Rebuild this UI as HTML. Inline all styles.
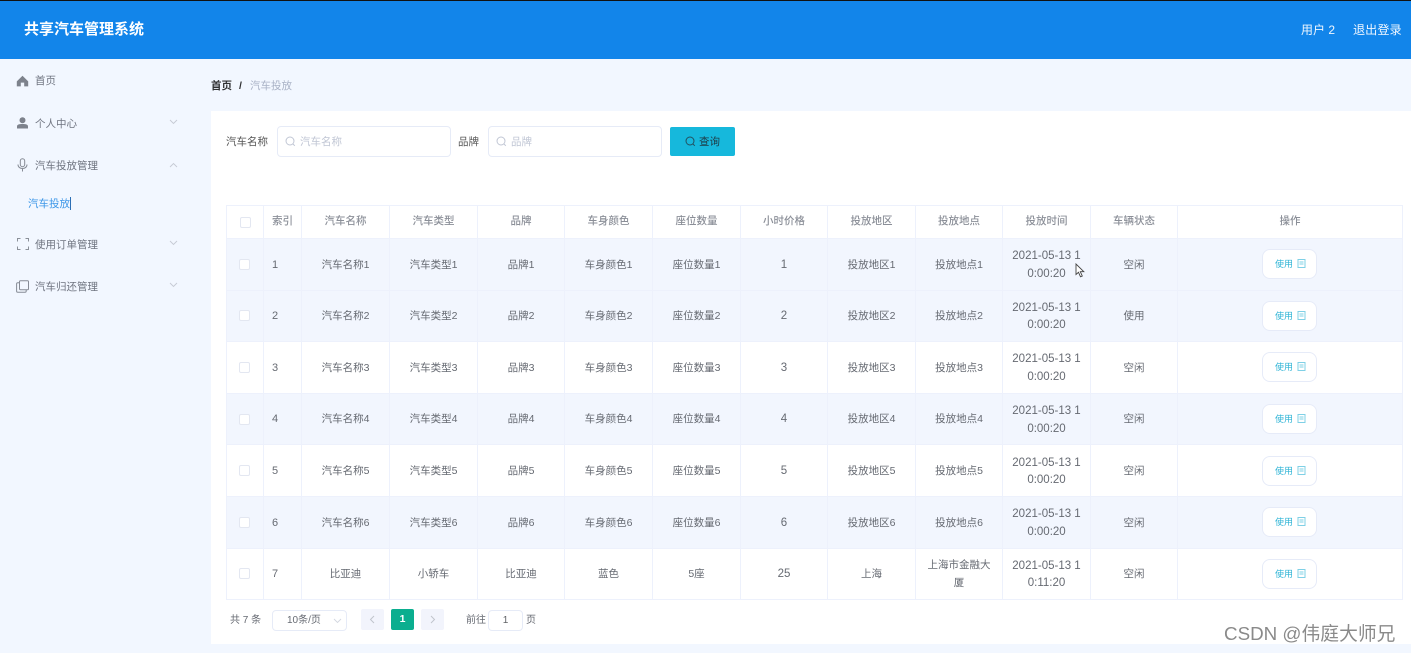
<!DOCTYPE html>
<html lang="zh"><head><meta charset="utf-8"><title>共享汽车管理系统</title>
<style>
*{box-sizing:border-box}
html,body{margin:0;padding:0;width:1411px;height:653px;overflow:hidden;background:#f2f7ff;font-family:"Liberation Sans","Noto Sans CJK SC",sans-serif;color:#606266}
body{filter:blur(.3px)}
.a{position:absolute;white-space:nowrap}
#top{left:0;top:0;width:1411px;height:59px;background:#1285ea;border-top:1px solid #111}
.menu{font-size:10.5px;color:#6f7480;line-height:14px}
.ic{position:absolute}
#card{left:211px;top:111px;width:1200px;height:533px;background:#fff}
.inp{height:31px;background:#fff;border:1px solid #e6ebf7;border-radius:4px}
.ph{font-size:10.5px;color:#c0c6d4;line-height:14px}
table{position:absolute;left:226px;top:205px;width:1177px;border-collapse:collapse;table-layout:fixed;font-size:10.5px;color:#666a72}
td,th{border:1px solid #edf1fc;text-align:center;padding:0 8px;line-height:17.5px;font-weight:400;overflow:hidden;word-break:break-all}
td{padding-top:2px}
td:has(span){padding-top:0}
th{height:33px;color:#8b8f98;font-weight:500;background:#fff}
tr{height:51.6px}
tr.h{height:33px}
tr.s td{background:#f2f6fe}
td.l,th.l{text-align:left;padding-left:8px;padding-right:0}
td.l{font-size:11px}
td.n{font-size:11.5px}
td.t{font-size:11.5px;padding-top:3px}
.cb{display:block;width:11px;height:11px;margin:0 auto;background:#fff;border:1px solid #e3e7f1;border-radius:2px}
td .cb{position:relative;left:-1px}
.btn{display:block;width:54.5px;height:30px;margin:0 auto;background:#fff;border:1px solid #e6ebf8;border-radius:8px;font-size:9px;color:#2fb4d6;line-height:28px;padding-left:2px;position:relative;left:-.5px}
.btn svg{vertical-align:-1px;margin-left:4px}
.pg{width:23px;height:21px;background:#f2f4fc;border-radius:2px;text-align:center}
.sm{font-size:10px;color:#666a72;line-height:14px}
</style></head><body>
<div id="top" class="a"></div>
<div class="a" style="left:24px;top:20px;font-size:15px;font-weight:700;color:#fff;line-height:20px">共享汽车管理系统</div>
<div class="a" style="left:1301px;top:22px;font-size:12px;color:#eef6ff;line-height:16px">用户 2</div>
<div class="a" style="left:1353px;top:22px;font-size:12.2px;color:#eef6ff;line-height:16px">退出登录</div>

<svg class="ic" style="left:16px;top:75px" width="13" height="12" viewBox="0 0 13 12"><path d="M6.5 0.8L0.8 6.4V11.4H4.8V7.6H8.2V11.4H12.2V6.4Z" fill="#7d828c"/></svg>
<div class="a menu" style="left:35px;top:74px">首页</div>
<svg class="ic" style="left:16px;top:117px" width="13" height="12" viewBox="0 0 13 12"><circle cx="6.5" cy="3.2" r="3" fill="#7d828c"/><path d="M1 11.5V9.4C1 7.6 3 7 6.5 7S12 7.6 12 9.4V11.5Z" fill="#7d828c"/></svg>
<div class="a menu" style="left:35px;top:116.500px">个人中心</div>
<svg class="a" style="left:169px;top:119px" width="9" height="6" viewBox="0 0 9 6"><path d="M1 1L4.500 4.500L8 1" fill="none" stroke="#c6cad4" stroke-width="0.9"/></svg>
<svg class="ic" style="left:17px;top:158px" width="11" height="14" viewBox="0 0 11 14"><rect x="3.300" y="0.700" width="4.400" height="8" rx="2.200" fill="none" stroke="#868b95"/><path d="M1 6.500C1 9 3 10.500 5.500 10.500S10 9 10 6.500M5.500 10.500V13.500" fill="none" stroke="#868b95"/></svg>
<div class="a menu" style="left:35px;top:158.500px">汽车投放管理</div>
<svg class="a" style="left:169px;top:162px" width="9" height="6" viewBox="0 0 9 6"><path d="M1 5L4.500 1.500L8 5" fill="none" stroke="#c6cad4" stroke-width="0.9"/></svg>
<div class="a" style="left:28px;top:197px;font-size:10.5px;line-height:14px;color:#3d97e8">汽车投放</div>
<div class="a" style="left:70px;top:197px;width:1px;height:13px;background:#2c6fb5"></div>
<svg class="ic" style="left:17px;top:238px" width="12" height="12" viewBox="0 0 12 12"><path d="M0.500 3.500V0.500H3.500M8.500 0.500H11.500V3.500M11.500 8.500V11.500H8.500M3.500 11.500H0.500V8.500" fill="none" stroke="#8b9099"/></svg>
<div class="a menu" style="left:35px;top:237.500px">使用订单管理</div>
<svg class="a" style="left:169px;top:240px" width="9" height="6" viewBox="0 0 9 6"><path d="M1 1L4.500 4.500L8 1" fill="none" stroke="#c6cad4" stroke-width="0.9"/></svg>
<svg class="ic" style="left:16px;top:280px" width="13" height="13" viewBox="0 0 13 13"><rect x="3.500" y="0.700" width="9" height="9" rx="1" fill="none" stroke="#868b95"/><path d="M3.500 2.800H1.800C1.100 2.800 0.600 3.300 0.600 4V11C0.600 11.700 1.100 12.300 1.800 12.300H9C9.700 12.300 10.200 11.700 10.200 11V9.700" fill="none" stroke="#868b95"/></svg>
<div class="a menu" style="left:35px;top:279.500px">汽车归还管理</div>
<svg class="a" style="left:169px;top:282px" width="9" height="6" viewBox="0 0 9 6"><path d="M1 1L4.500 4.500L8 1" fill="none" stroke="#c6cad4" stroke-width="0.9"/></svg>

<div class="a" style="left:211px;top:79px;font-size:10.5px;line-height:14px;color:#303133;font-weight:700">首页</div>
<div class="a" style="left:239px;top:79px;font-size:10.5px;line-height:14px;color:#303133;font-weight:700">/</div>
<div class="a" style="left:250px;top:79px;font-size:10.5px;line-height:14px;color:#a9b2c6">汽车投放</div>

<div id="card" class="a"></div>
<div class="a" style="left:226px;top:135px;font-size:10.5px;line-height:14px;color:#555">汽车名称</div>
<div class="a inp" style="left:277px;top:126px;width:174px"></div>
<svg class="a" style="left:285px;top:136px" width="11" height="11" viewBox="0 0 11 11"><circle cx="5" cy="5" r="4" fill="none" stroke="#c0c6d4"/><path d="M8 8L9.800 9.800" stroke="#c0c6d4"/></svg>
<div class="a ph" style="left:300px;top:135px">汽车名称</div>
<div class="a" style="left:458px;top:135px;font-size:10.5px;line-height:14px;color:#555">品牌</div>
<div class="a inp" style="left:488px;top:126px;width:174px"></div>
<svg class="a" style="left:496px;top:136px" width="11" height="11" viewBox="0 0 11 11"><circle cx="5" cy="5" r="4" fill="none" stroke="#c0c6d4"/><path d="M8 8L9.800 9.800" stroke="#c0c6d4"/></svg>
<div class="a ph" style="left:511px;top:135px">品牌</div>
<div class="a" style="left:670px;top:127px;width:65px;height:29px;background:#16b8dc;border-radius:2px"></div>
<svg class="a" style="left:685px;top:136px" width="11" height="11" viewBox="0 0 11 11"><circle cx="5" cy="5" r="4" fill="none" stroke="#23505f"/><path d="M8 8L9.800 9.800" stroke="#23505f"/></svg>
<div class="a" style="left:699px;top:135px;font-size:10.5px;line-height:14px;color:#1e3b46">查询</div>

<table>
<colgroup><col style="width:37px"><col style="width:38px"><col style="width:88px"><col style="width:88px"><col style="width:87px"><col style="width:88px"><col style="width:88px"><col style="width:87px"><col style="width:88px"><col style="width:87px"><col style="width:88px"><col style="width:87px"><col style="width:225px"></colgroup>
<tr class="h"><th><span class="cb"></span></th><th class="l">索引</th><th>汽车名称</th><th>汽车类型</th><th>品牌</th><th>车身颜色</th><th>座位数量</th><th>小时价格</th><th>投放地区</th><th>投放地点</th><th>投放时间</th><th>车辆状态</th><th>操作</th></tr>
<tr class="s"><td><span class="cb"></span></td><td class="l">1</td><td>汽车名称1</td><td>汽车类型1</td><td>品牌1</td><td>车身颜色1</td><td>座位数量1</td><td class="n">1</td><td>投放地区1</td><td>投放地点1</td><td class="t">2021-05-13 10:00:20</td><td>空闲</td><td><span class="btn">使用<svg width="9" height="9" viewBox="0 0 9 9"><path d="M1 .5H8V8.500H1ZM2.500 3H6.500M2.500 5H6.500" fill="none" stroke="#7fd0e6"/></svg></span></td></tr>
<tr class="s"><td><span class="cb"></span></td><td class="l">2</td><td>汽车名称2</td><td>汽车类型2</td><td>品牌2</td><td>车身颜色2</td><td>座位数量2</td><td class="n">2</td><td>投放地区2</td><td>投放地点2</td><td class="t">2021-05-13 10:00:20</td><td>使用</td><td><span class="btn">使用<svg width="9" height="9" viewBox="0 0 9 9"><path d="M1 .5H8V8.500H1ZM2.500 3H6.500M2.500 5H6.500" fill="none" stroke="#7fd0e6"/></svg></span></td></tr>
<tr><td><span class="cb"></span></td><td class="l">3</td><td>汽车名称3</td><td>汽车类型3</td><td>品牌3</td><td>车身颜色3</td><td>座位数量3</td><td class="n">3</td><td>投放地区3</td><td>投放地点3</td><td class="t">2021-05-13 10:00:20</td><td>空闲</td><td><span class="btn">使用<svg width="9" height="9" viewBox="0 0 9 9"><path d="M1 .5H8V8.500H1ZM2.500 3H6.500M2.500 5H6.500" fill="none" stroke="#7fd0e6"/></svg></span></td></tr>
<tr class="s"><td><span class="cb"></span></td><td class="l">4</td><td>汽车名称4</td><td>汽车类型4</td><td>品牌4</td><td>车身颜色4</td><td>座位数量4</td><td class="n">4</td><td>投放地区4</td><td>投放地点4</td><td class="t">2021-05-13 10:00:20</td><td>空闲</td><td><span class="btn">使用<svg width="9" height="9" viewBox="0 0 9 9"><path d="M1 .5H8V8.500H1ZM2.500 3H6.500M2.500 5H6.500" fill="none" stroke="#7fd0e6"/></svg></span></td></tr>
<tr><td><span class="cb"></span></td><td class="l">5</td><td>汽车名称5</td><td>汽车类型5</td><td>品牌5</td><td>车身颜色5</td><td>座位数量5</td><td class="n">5</td><td>投放地区5</td><td>投放地点5</td><td class="t">2021-05-13 10:00:20</td><td>空闲</td><td><span class="btn">使用<svg width="9" height="9" viewBox="0 0 9 9"><path d="M1 .5H8V8.500H1ZM2.500 3H6.500M2.500 5H6.500" fill="none" stroke="#7fd0e6"/></svg></span></td></tr>
<tr class="s"><td><span class="cb"></span></td><td class="l">6</td><td>汽车名称6</td><td>汽车类型6</td><td>品牌6</td><td>车身颜色6</td><td>座位数量6</td><td class="n">6</td><td>投放地区6</td><td>投放地点6</td><td class="t">2021-05-13 10:00:20</td><td>空闲</td><td><span class="btn">使用<svg width="9" height="9" viewBox="0 0 9 9"><path d="M1 .5H8V8.500H1ZM2.500 3H6.500M2.500 5H6.500" fill="none" stroke="#7fd0e6"/></svg></span></td></tr>
<tr><td><span class="cb"></span></td><td class="l">7</td><td>比亚迪</td><td>小轿车</td><td>比亚迪</td><td>蓝色</td><td>5座</td><td class="n">25</td><td>上海</td><td>上海市金融大厦</td><td class="t">2021-05-13 10:11:20</td><td>空闲</td><td><span class="btn">使用<svg width="9" height="9" viewBox="0 0 9 9"><path d="M1 .5H8V8.500H1ZM2.500 3H6.500M2.500 5H6.500" fill="none" stroke="#7fd0e6"/></svg></span></td></tr>
</table>

<svg class="a" style="left:1075px;top:263px" width="11" height="15" viewBox="0 0 11 15"><path d="M1 1V11.500L3.500 9.300L5.500 13.800L7.300 13L5.300 8.700H8.800Z" fill="#fff" stroke="#444" stroke-width="0.900"/></svg>

<div class="a sm" style="left:230px;top:614px">共 7 条</div>
<div class="a inp" style="left:272px;top:610px;width:75px;height:21px"></div>
<div class="a sm" style="left:287px;top:614px">10条/页</div>
<svg class="a" style="left:333px;top:618px" width="9" height="6" viewBox="0 0 9 6"><path d="M1 1L4.500 4.500L8 1" fill="none" stroke="#d3d7e0" stroke-width="0.900"/></svg>
<div class="a pg" style="left:361px;top:609px"></div>
<svg class="a" style="left:369px;top:615px" width="6" height="9" viewBox="0 0 6 9"><path d="M5 1L1.500 4.500L5 8" fill="none" stroke="#c0c4cc"/></svg>
<div class="a" style="left:391px;top:609px;width:23px;height:21px;background:#0bae8f;border-radius:2px;color:#fff;font-size:10.5px;font-weight:700;text-align:center;line-height:21px">1</div>
<div class="a pg" style="left:421px;top:609px"></div>
<svg class="a" style="left:430px;top:615px" width="6" height="9" viewBox="0 0 6 9"><path d="M1 1L4.500 4.500L1 8" fill="none" stroke="#c0c4cc"/></svg>
<div class="a sm" style="left:466px;top:614px">前往</div>
<div class="a inp" style="left:488px;top:610px;width:35px;height:21px;font-size:10px;text-align:center;line-height:19px">1</div>
<div class="a sm" style="left:526px;top:614px">页</div>
<div class="a" style="left:1224px;top:622px;font-size:18.8px;line-height:24px;color:#8a8a8a">CSDN @伟庭大师兄</div>
</body></html>
